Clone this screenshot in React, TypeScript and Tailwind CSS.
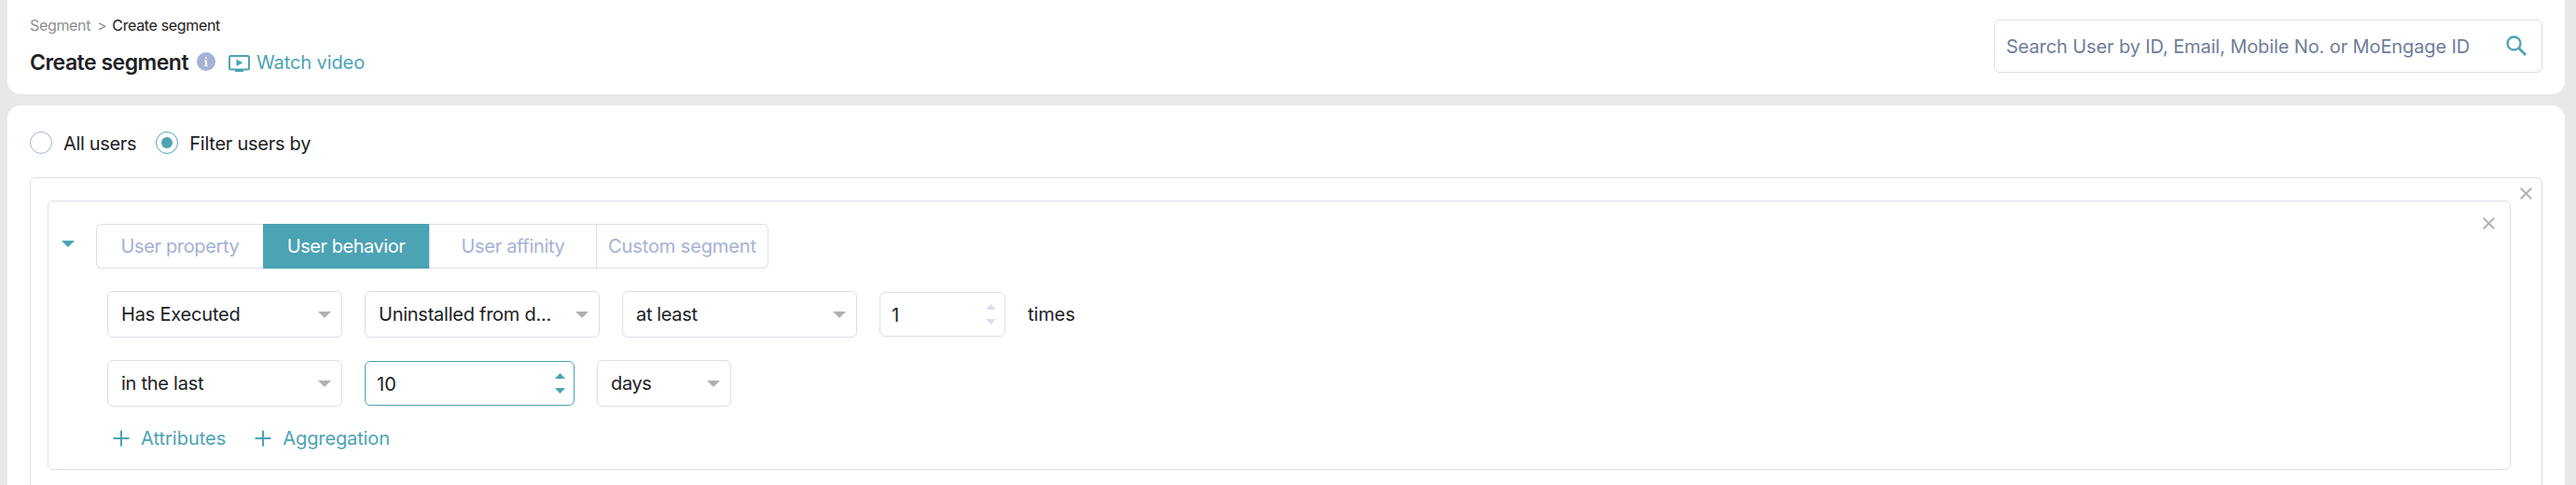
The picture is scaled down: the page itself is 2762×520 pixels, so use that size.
import type { ReactNode } from "react";
import clsx from "clsx";

const TABS = [
  { label: "User property", className: "w-[179px] rounded-l-[6px] border-l tracking-[-0.37px]" },
  { label: "User behavior", className: "w-[178px] tracking-[-0.46px]", active: true },
  { label: "User affinity", className: "w-[180px] border-l border-r tracking-[-0.33px]" },
  { label: "Custom segment", className: "w-[184px] rounded-r-[6px] border-r tracking-[-0.12px]" },
];

function CloseIcon() {
  return (
    <svg className="size-[13px]" viewBox="0 0 13 13" fill="none" stroke="#b0b0b0" strokeWidth="1.8">
      <path d="M0.75 0.75 12.25 12.25M12.25 0.75 0.75 12.25" />
    </svg>
  );
}

function Caret({ className }: { className?: string }) {
  return (
    <svg className={clsx("h-[7px] w-[14px] shrink-0", className)} viewBox="0 0 14 7" fill="currentColor">
      <path d="M0 0h14L7 7z" />
    </svg>
  );
}

function Select({ className, children }: { className: string; children: ReactNode }) {
  return (
    <div
      className={clsx(
        "flex h-[50px] shrink-0 items-center justify-between rounded-[6px] border border-[#dbdeec] pr-[11px] pl-[14px]",
        className,
      )}
    >
      <span className="whitespace-nowrap">{children}</span>
      <Caret className="text-[#b0b0b0]" />
    </div>
  );
}

function NumberInput({ value, className }: { value: string; className: string }) {
  return (
    <div
      className={clsx(
        "flex h-12 shrink-0 items-center justify-between rounded-[6px] border pr-[9px] pl-3",
        className,
      )}
    >
      <span className="pt-px text-[#202124]">{value}</span>
      <svg className="h-[22px] w-[11px]" viewBox="0 0 11 22" fill="currentColor">
        <path d="M0 6 5.500 0 11 6zM0 16h11l-5.500 6z" />
      </svg>
    </div>
  );
}

function Radio({ checked }: { checked?: boolean }) {
  return (
    <span
      className={clsx(
        "flex size-6 shrink-0 items-center justify-center rounded-full border",
        checked ? "border-[#4ba3b4]" : "border-[#a5b1d5]",
      )}
    >
      {checked && <span className="size-3 rounded-full bg-[#4ba3b4]" />}
    </span>
  );
}

function AddLink({ className, children }: { className?: string; children: ReactNode }) {
  return (
    <div className={clsx("flex items-center text-[#4ba3b4]", className)}>
      <svg className="mr-3 size-[18px]" viewBox="0 0 18 18" fill="none" stroke="currentColor" strokeWidth="2">
        <path d="M0.500 9h17M9 0.500v17" />
      </svg>
      <span>{children}</span>
    </div>
  );
}

function Header() {
  return (
    <header className="flex h-[101px] shrink-0 justify-between rounded-b-[14px] bg-white pr-6 pl-6">
      <div className="pt-[15px]">
        <div className="flex h-6 items-center text-base tracking-[-0.34px]">
          <span className="text-[#8f8f8f]">Segment</span>
          <span className="ml-[7px] text-[#8f8f8f]">&gt;</span>
          <span className="ml-[6px]">Create segment</span>
        </div>
        <div className="mt-[13px] flex h-7 items-center">
          <h1 className="w-[171px] pt-0.5 text-[23px] leading-7 font-semibold tracking-[-0.5px] whitespace-nowrap">
            Create segment
          </h1>
          <svg className="ml-2 size-5" viewBox="0 0 20 20">
            <circle cx="10" cy="10" r="10" fill="#a5b1d5" />
            <path d="M9 5h2v2H9zM8 8.500h3v5.500h1v1H8v-1h1V9.500H8z" fill="#fff" />
          </svg>
          <svg className="mt-1 ml-[14px] h-[18px] w-[23px]" viewBox="0 0 23 18" fill="none">
            <rect x="1" y="1" width="21" height="14.500" rx="1.500" stroke="#4ba3b4" strokeWidth="2" />
            <path d="M8.500 4.500v7.500l7-3.750zM7 16h9v2H7z" fill="#4ba3b4" />
          </svg>
          <a className="mt-0.5 ml-[7px] tracking-[-0.1px] text-[#4ba3b4]">Watch video</a>
        </div>
      </div>
      <div className="mt-[21px] flex h-[57px] w-[588px] items-center justify-between rounded-[6px] border border-[#dbdeec] pr-4 pl-3">
        <span className="tracking-[-0.11px] whitespace-nowrap text-[#6f7d99]">
          Search User by ID, Email, Mobile No. or MoEngage ID
        </span>
        <svg className="mb-px size-[22px]" viewBox="0 0 22 22" fill="none" stroke="#4ba3b4">
          <circle cx="8.500" cy="8.500" r="7" strokeWidth="2.300" />
          <path d="m13.500 13.500 7.500 7.500" strokeWidth="2.800" />
        </svg>
      </div>
    </header>
  );
}

function BehaviorFilter() {
  return (
    <section className="h-[289px] w-[2641px] rounded-[6px] border border-[#dbdeec]">
      <div className="flex pt-6">
        <Caret className="mt-[18px] ml-[14px] text-[#4ba3b4]" />
        <div className="ml-[23px] flex h-12 w-[721px] shrink-0">
          {TABS.map((tab) => (
            <div
              key={tab.label}
              className={clsx(
                "flex shrink-0 items-center justify-center border-y",
                tab.active
                  ? "border-[#4ba3b4] bg-[#4ba3b4] text-white"
                  : "border-[#dbdeec] text-[#a5b1d5]",
                tab.className,
              )}
            >
              {tab.label}
            </div>
          ))}
        </div>
        <div className="mt-[-7px] mr-4 ml-auto">
          <CloseIcon />
        </div>
      </div>

      <div className="mt-6 flex items-center gap-6 pl-[63px]">
        <Select className="w-[252px] tracking-[-0.2px]">Has Executed</Select>
        <Select className="w-[252px] tracking-[-0.25px]">Uninstalled from d...</Select>
        <Select className="w-[252px] tracking-[-0.35px]">at least</Select>
        <NumberInput value="1" className="w-[135px] border-[#dbdeec] text-[#dbdfee]" />
        <span className="tracking-[-0.1px]">times</span>
      </div>

      <div className="mt-6 flex items-center gap-6 pl-[63px]">
        <Select className="w-[252px] tracking-[-0.26px]">in the last</Select>
        <NumberInput value="10" className="w-[225px] border-[#4ba3b4] text-[#4ba3b4]" />
        <Select className="w-[144px] tracking-[-0.35px]">days</Select>
      </div>

      <div className="mt-5 flex gap-[31px] pl-[69px]">
        <AddLink>Attributes</AddLink>
        <AddLink className="tracking-[-0.12px]">Aggregation</AddLink>
      </div>
    </section>
  );
}

export default function App() {
  return (
    <div className="flex h-[520px] w-[2762px] flex-col gap-3 overflow-hidden bg-[#e8e8e8] pr-3 pl-2 font-[Inter,sans-serif] text-[20px] leading-7 text-[#202124]">
      <Header />

      <main className="flex-1 rounded-t-[14px] bg-white px-6 pt-[26px]">
        <div className="flex h-7 items-center">
          <Radio />
          <span className="mt-0.5 ml-3 tracking-[-0.33px]">All users</span>
          <span className="ml-[21px]">
            <Radio checked />
          </span>
          <span className="mt-0.5 ml-3 tracking-[-0.26px]">Filter users by</span>
        </div>

        <div className="mt-[23px] flex h-[360px] items-start justify-between rounded-t-[6px] border border-[#dbdeec] pt-6 pr-2.5 pl-[18px]">
          <BehaviorFilter />
          <div className="mt-[-14px]">
            <CloseIcon />
          </div>
        </div>
      </main>
    </div>
  );
}
